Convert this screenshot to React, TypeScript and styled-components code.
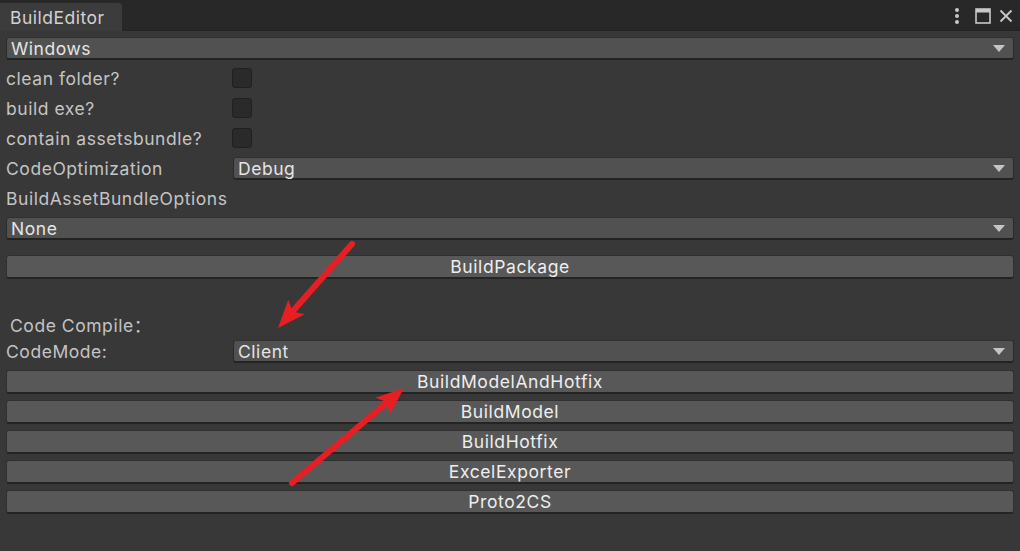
import React from "react";
import styled, { createGlobalStyle } from "styled-components";

const Global = createGlobalStyle`
  html, body { margin: 0; padding: 0; background: #383838; }
  body { font-family: Inter, "Noto Sans", "Noto Sans CJK SC", sans-serif; overflow: hidden; }
  * { box-sizing: border-box; }
`;

const Window = styled.div`
  position: relative;
  width: 1020px;
  height: 551px;
  background: #383838;
  display: flex;
  flex-direction: column;
`;

const TitleBar = styled.div`
  height: 31px;
  background: #282828;
  display: flex;
  align-items: flex-end;
  justify-content: space-between;
  border-bottom: 1px solid #232323;
`;

const Tab = styled.div`
  width: 122px;
  height: 28px;
  background: #3c3c3c;
  border-top-right-radius: 4px;
  color: #d2d2d2;
  font-size: 17.5px;
  letter-spacing: 0.5px;
  display: flex;
  align-items: center;
  padding-left: 10px;
  padding-top: 1px;
  margin-bottom: -1px;
`;

const WinIcons = styled.div`
  display: flex;
  align-items: center;
  gap: 8px;
  height: 31px;
  padding-right: 7px;
  align-self: flex-start;
`;

const Content = styled.div`
  display: flex;
  flex-direction: column;
  padding: 2px 6px 0 6px;
`;

const Row = styled.div<{ $h?: number; $mt?: number }>`
  height: ${(p) => p.$h ?? 30}px;
  margin-top: ${(p) => p.$mt ?? 0}px;
  display: flex;
  align-items: center;
`;

const Label = styled.div<{ $indent?: number }>`
  width: 227px;
  flex: none;
  color: #c4c4c4;
  font-size: 17.5px;
  letter-spacing: 0.55px;
  padding-left: ${(p) => p.$indent ?? 0}px;
  padding-top: 1px;
  white-space: nowrap;
`;

const Check = styled.div`
  width: 20px;
  height: 20px;
  margin-left: -1px;
  background: #2a2a2a;
  border: 1px solid #202020;
  border-radius: 3px;
`;

const Drop = styled.div`
  flex: 1;
  height: 23px;
  background: #515151;
  border: 1px solid #2a2a2a;
  border-top-color: #303030;
  border-bottom: 2px solid #232323;
  border-radius: 3px;
  display: flex;
  align-items: center;
  justify-content: space-between;
  padding: 1px 8px 0 4px;
  color: #e4e4e4;
  font-size: 17.5px;
  letter-spacing: 0.55px;
`;

const Arrow = styled.div`
  width: 0;
  height: 0;
  border-left: 6px solid transparent;
  border-right: 6px solid transparent;
  border-top: 7px solid #c4c4c4;
`;

const Button = styled.button<{ $mt?: number }>`
  height: 24px;
  margin-top: ${(p) => p.$mt ?? 6}px;
  width: 100%;
  background: #585858;
  border: 1px solid #303030;
  border-bottom: 2px solid #242424;
  border-radius: 3px;
  color: #eeeeee;
  font-family: Inter, "Noto Sans", sans-serif;
  font-size: 17.5px;
  letter-spacing: 0.6px;
  padding: 1px 0 0 0;
  display: flex;
  align-items: center;
  justify-content: center;
  line-height: 1;
`;

const Overlay = styled.svg`
  position: absolute;
  left: 0;
  top: 0;
  pointer-events: none;
`;

function ArrowLine({ x1, y1, x2, y2 }: { x1: number; y1: number; x2: number; y2: number }) {
  const dx = x2 - x1;
  const dy = y2 - y1;
  const len = Math.hypot(dx, dy);
  const ux = dx / len;
  const uy = dy / len;
  const hl = 28;
  const hw = 11;
  const bx = x2 - ux * hl;
  const by = y2 - uy * hl;
  const nx = -uy;
  const ny = ux;
  const notchX = x2 - ux * (hl - 6);
  const notchY = y2 - uy * (hl - 6);
  return (
    <g>
      <line x1={x1} y1={y1} x2={notchX} y2={notchY} stroke="#e81e25" strokeWidth={6} strokeLinecap="round" />
      <polygon
        points={`${x2},${y2} ${bx + nx * hw},${by + ny * hw} ${notchX},${notchY} ${bx - nx * hw},${by - ny * hw}`}
        fill="#e81e25"
      />
    </g>
  );
}

export default function App() {
  return (
    <>
      <Global />
      <Window>
        <TitleBar>
          <Tab>BuildEditor</Tab>
          <WinIcons>
            <svg width="8" height="18" viewBox="0 0 8 18">
              <circle cx="4" cy="3" r="2" fill="#c8c8c8" />
              <circle cx="4" cy="9" r="2" fill="#c8c8c8" />
              <circle cx="4" cy="15" r="2" fill="#c8c8c8" />
            </svg>
            <svg width="16" height="16" viewBox="0 0 16 16" style={{ marginLeft: 6 }}>
              <rect x="1" y="1" width="14" height="14" fill="none" stroke="#c8c8c8" strokeWidth="1.6" />
              <rect x="1" y="1" width="14" height="3.5" fill="#c8c8c8" />
            </svg>
            <svg width="14" height="14" viewBox="0 0 14 14">
              <path d="M1.5 1.5 L12.5 12.5 M12.5 1.5 L1.5 12.5" stroke="#c8c8c8" strokeWidth="1.8" />
            </svg>
          </WinIcons>
        </TitleBar>
        <Content>
          <Row>
            <Drop>
              <span>Windows</span>
              <Arrow />
            </Drop>
          </Row>
          <Row>
            <Label>clean folder?</Label>
            <Check />
          </Row>
          <Row>
            <Label>build exe?</Label>
            <Check />
          </Row>
          <Row>
            <Label>contain assetsbundle?</Label>
            <Check />
          </Row>
          <Row>
            <Label>CodeOptimization</Label>
            <Drop>
              <span>Debug</span>
              <Arrow />
            </Drop>
          </Row>
          <Row>
            <Label>BuildAssetBundleOptions</Label>
          </Row>
          <Row>
            <Drop>
              <span>None</span>
              <Arrow />
            </Drop>
          </Row>
          <Button $mt={12}>BuildPackage</Button>
          <Row $mt={30}>
            <Label $indent={4}>Code Compile：</Label>
          </Row>
          <Row $h={24} $mt={0}>
            <Label>CodeMode:</Label>
            <Drop>
              <span>Client</span>
              <Arrow />
            </Drop>
          </Row>
          <Button $mt={7}>BuildModelAndHotfix</Button>
          <Button>BuildModel</Button>
          <Button>BuildHotfix</Button>
          <Button>ExcelExporter</Button>
          <Button>Proto2CS</Button>
        </Content>
        <Overlay width="1020" height="551">
          <ArrowLine x1={352} y1={244} x2={278} y2={328} />
          <ArrowLine x1={292} y1={483} x2={404} y2={388} />
        </Overlay>
      </Window>
    </>
  );
}
